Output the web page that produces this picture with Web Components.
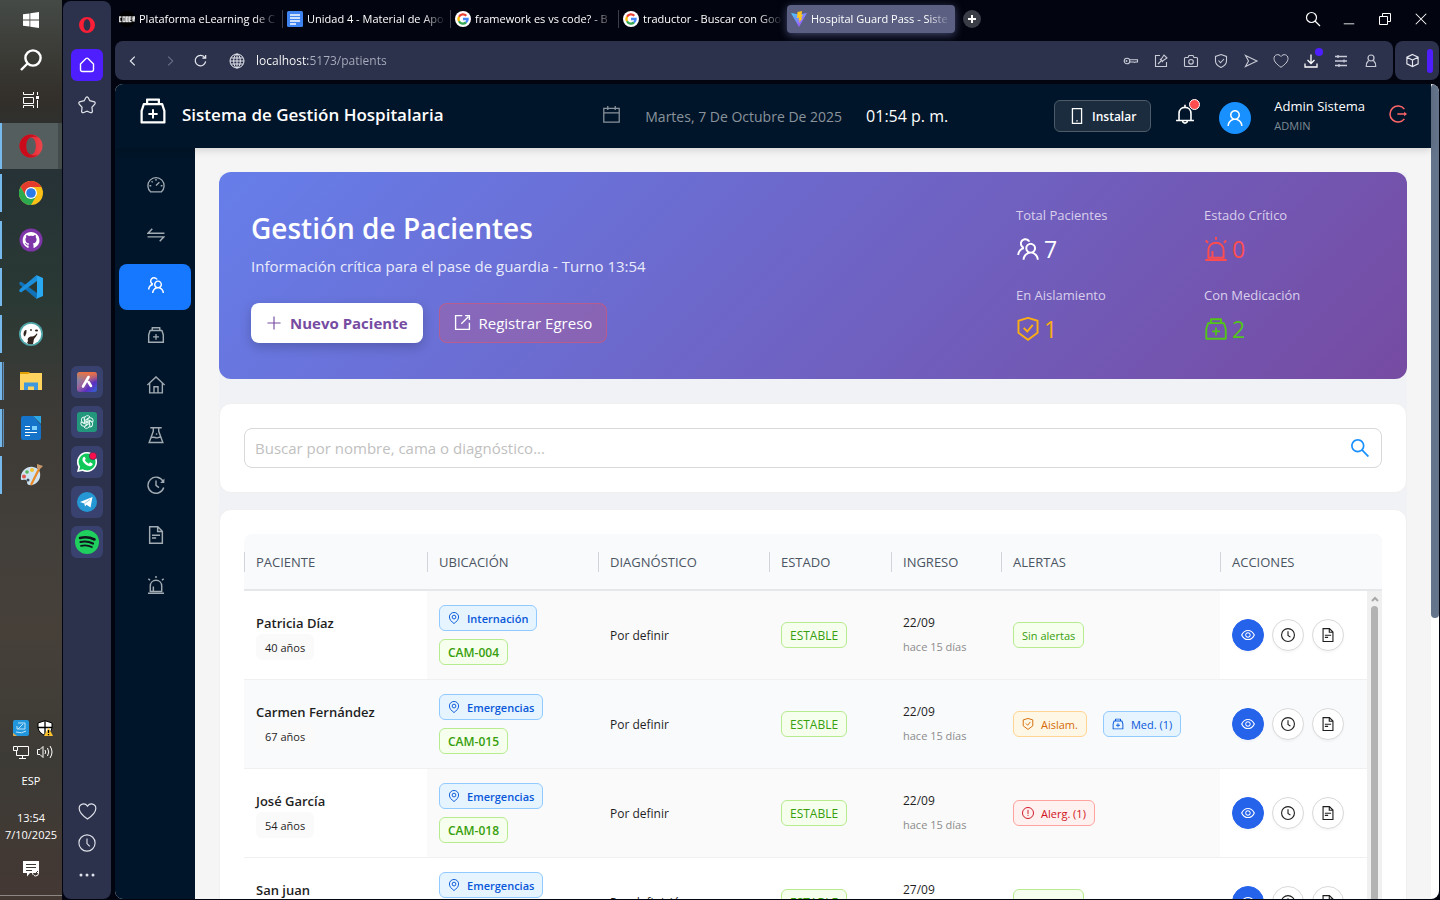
<!DOCTYPE html>
<html lang="es">
<head>
<meta charset="utf-8">
<title>Hospital Guard Pass - Sistema de Gestión</title>
<style>
html,body{margin:0;height:100%}
body{background:#02040f;font-family:"Open Sans","Noto Sans",sans-serif;font-size:13px;color:#1f1f1f;overflow:hidden}
</style>
</head>
<body>
<desktop-shell></desktop-shell>
<script>
/* ---------- icon registry ---------- */
const A = d => ['64 64 896 896', `<path fill="currentColor" d="${d}"/>`];
const L = (d, w = 1) => ['0 0 16 16', `<g fill="none" stroke="currentColor" stroke-width="${w}">${d}</g>`];
const SA = (d, w = 72) => ['64 64 896 896', `<g fill="none" stroke="currentColor" stroke-width="${w}">${d}</g>`];
const ICONS = {
  medicine: A('M839.2 278.1a32 32 0 00-30.4-22.1H736V144c0-17.7-14.3-32-32-32H320c-17.7 0-32 14.3-32 32v112h-72.8a31.9 31.9 0 00-30.4 22.1L112 502v378c0 17.7 14.3 32 32 32h736c17.7 0 32-14.3 32-32V502l-72.8-223.9zM360 184h304v72H360v-72zm480 656H184V513.4L244.3 328h535.4L840 513.4V840zM652 572H544V464c0-4.4-3.6-8-8-8h-48c-4.4 0-8 3.6-8 8v108H372c-4.4 0-8 3.6-8 8v48c0 4.4 3.6 8 8 8h108v108c0 4.4 3.6 8 8 8h48c4.4 0 8-3.6 8-8V636h108c4.4 0 8-3.6 8-8v-48c0-4.4-3.6-8-8-8z'),
  team: A('M824.2 699.9a301.55 301.55 0 00-86.4-60.4C783.1 602.8 812 546.8 812 484c0-110.8-92.4-201.7-203.2-200-109.1 1.7-197 90.6-197 200 0 62.8 29 118.8 74.2 155.5a300.95 300.95 0 00-86.4 60.4C345 754.6 314 826.8 312 903.8a8 8 0 008 8.2h56c4.3 0 7.9-3.4 8-7.7 1.9-58 25.4-112.3 66.7-153.5A226.62 226.62 0 01612 684c60.9 0 118.2 23.7 161.3 66.8C814.6 792 838 846.3 840 904.3c.1 4.3 3.7 7.7 8 7.7h56a8 8 0 008-8.2c-2-77-33-149.2-87.8-203.9zM612 612c-34.2 0-66.4-13.3-90.5-37.5a126.86 126.86 0 01-37.5-91.8c.3-32.8 13.4-64.5 36.3-88 24-24.6 56.1-38.3 90.4-38.7 33.9-.3 66.8 12.9 91 36.6 24.8 24.3 38.4 56.8 38.4 91.4 0 34.2-13.3 66.3-37.5 90.5A127.3 127.3 0 01612 612zM361.5 510.4c-.9-8.7-1.4-17.5-1.4-26.4 0-15.9 1.5-31.4 4.3-46.5.7-3.6-1.2-7.3-4.5-8.8-13.6-6.1-26.1-14.5-36.9-25.1a127.54 127.54 0 01-38.7-95.4c.9-32.1 13.8-62.6 36.3-85.6 24.7-25.3 57.9-39.1 93.2-38.7 31.9.3 62.7 12.6 86 34.4 7.9 7.4 14.7 15.6 20.4 24.4 2 3.1 5.9 4.4 9.3 3.2 17.6-6.1 36.2-10.4 55.3-12.4 5.6-.6 8.8-6.6 6.3-11.6-32.5-64.3-98.9-108.7-175.7-109.9-110.9-1.7-203.3 89.2-203.3 199.9 0 62.8 28.9 118.8 74.2 155.5-31.8 14.7-61.1 35-86.5 60.4-54.8 54.7-85.8 126.9-87.8 204a8 8 0 008 8.2h56.1c4.3 0 7.9-3.4 8-7.7 1.9-58 25.4-112.3 66.7-153.5 29.4-29.4 65.4-49.8 104.7-59.7 3.9-1 6.5-4.7 6-8.7z'),
  user: A('M858.5 763.6a374 374 0 00-80.6-119.5 375.63 375.63 0 00-119.5-80.6c-.4-.2-.8-.3-1.2-.5C719.5 518 760 444.7 760 362c0-137-111-248-248-248S264 225 264 362c0 82.7 40.5 156 102.8 201.1-.4.2-.8.3-1.2.5-44.8 18.9-85 46-119.5 80.6a375.63 375.63 0 00-80.6 119.5A371.7 371.7 0 00136 901.8a8 8 0 008 8.2h60c4.4 0 7.9-3.5 8-7.8 2-77.2 33-149.5 87.8-204.3 56.7-56.7 132-87.9 212.2-87.9s155.5 31.2 212.2 87.9C779 752.7 810 825 812 902.2c.1 4.4 3.6 7.8 8 7.8h60a8 8 0 008-8.2c-1-47.8-10.9-94.3-29.5-138.2zM512 534c-45.9 0-89.1-17.9-121.6-50.4S340 407.9 340 362c0-45.9 17.9-89.1 50.4-121.6S466.1 190 512 190s89.1 17.9 121.6 50.4S684 316.1 684 362c0 45.9-17.9 89.1-50.4 121.6S557.9 534 512 534z'),
  search: A('M909.6 854.5L649.9 594.8C690.2 542.7 712 479 712 412c0-80.2-31.3-155.4-87.9-212.1-56.6-56.7-132-87.9-212.1-87.9s-155.5 31.3-212.1 87.9C143.2 256.5 112 331.8 112 412c0 80.1 31.3 155.5 87.9 212.1C256.5 680.8 331.8 712 412 712c67 0 130.6-21.8 182.7-62l259.7 259.6a8.2 8.2 0 0011.6 0l43.6-43.5a8.2 8.2 0 000-11.6zM570.4 570.4C528 612.7 471.8 636 412 636s-116-23.3-158.4-65.6C211.3 528 188 471.8 188 412s23.3-116.1 65.6-158.4C296 211.3 352.2 188 412 188s116.1 23.2 158.4 65.6S636 352.2 636 412s-23.3 116.1-65.6 158.4z'),
  eye: A('M942.2 486.2C847.4 286.5 704.1 186 512 186c-192.2 0-335.4 100.5-430.2 300.3a60.3 60.3 0 000 51.5C176.6 737.5 319.9 838 512 838c192.2 0 335.4-100.5 430.2-300.3 7.7-16.2 7.7-35 0-51.5zM512 766c-161.3 0-279.4-81.8-362.7-254C232.6 339.8 350.7 258 512 258c161.3 0 279.4 81.8 362.7 254C791.5 684.2 673.4 766 512 766zm-4-430c-97.2 0-176 78.8-176 176s78.8 176 176 176 176-78.8 176-176-78.8-176-176-176zm0 288c-61.9 0-112-50.1-112-112s50.1-112 112-112 112 50.1 112 112-50.1 112-112 112z'),
  clock: SA('<circle cx="512" cy="512" r="412"/><path d="M512 272V534L668 648"/>'),
  doc: SA('<path d="M196 100H602L828 326V924H196ZM594 100V334H828"/><path d="M312 524H712M312 660H520"/>'),
  shield: SA('<path d="M512 98L868 206V650L512 916L156 650V206Z"/><path d="M352 470L484 606L690 356"/>'),
  alert: SA('<path d="M228 838V560C228 400 350 280 512 280S796 400 796 560V838Z"/><path d="M380 838V590M112 924H912M512 64V168M130 196L216 280M894 196L808 280"/>'),
  pin: SA('<path d="M512 924C330 790 168 640 168 434C168 236 330 98 512 98S856 236 856 434C856 640 694 790 512 924Z"/><circle cx="512" cy="442" r="140"/>'),
  warn: SA('<circle cx="512" cy="512" r="412"/><path d="M512 280V580M512 650V726"/>'),
  calendar: SA('<path d="M148 220H876V876H148ZM148 436H876M336 112V296M688 112V296"/>', 60),
  mobile: SA('<path d="M256 100H768V924H256Z"/><path d="M472 786H552"/>'),
  bell: SA('<path d="M244 804V484C244 330 356 216 512 216S780 330 780 484V804M112 804H912M512 216V100M404 816C410 890 450 920 512 920S614 890 620 816"/>'),
  logout: SA('<path d="M830 268A400 400 0 1 0 830 756"/><path d="M480 512H860"/><path fill="currentColor" stroke="none" d="M820 400L960 512L820 624Z"/>', 76),
  plus: SA('<path d="M512 144V880M144 512H880"/>', 64),
  export: SA('<path d="M500 148H148V876H876V524M450 574L820 204M650 148H876V374"/>'),
  gauge: SA('<path d="M250 856A404 404 0 1 1 774 856Z"/><path d="M512 540L680 372M512 210V296M190 548H276M748 548H834M292 328L346 382"/>', 66),
  swap: SA('<path d="M932 420H120L326 196M92 604H904L698 828"/>', 72),
  home: SA('<path d="M80 516L512 110L944 516M196 420V904H828V420M412 904V600H612V904"/>', 70),
  flask: SA('<path d="M228 148H796M376 148V330L172 884H852L648 330V148M256 650C400 560 500 700 620 640L750 590"/><path d="M540 430V500"/>', 70),
  history: SA('<path d="M862 326A400 400 0 1 0 896 640"/><path d="M512 290V528L660 640"/><path fill="currentColor" stroke="none" d="M930 190V410H720Z"/>', 70),
  o_home: L('<path d="M1.500 7L7 1.500Q8 .8 9 1.500L14.500 7V12.500Q14.500 14.500 12.500 14.500H3.500Q1.500 14.500 1.500 12.500Z"/>', 1.4),
  o_star: L('<path d="M7 1.400Q8 .3 9 1.400L10.500 4.200L14.600 5.200Q15.700 6 14.900 7.200L12.400 10L12.800 13.800Q12.300 15.300 10.800 14.700L8 13.500L5.200 14.700Q3.700 15.300 3.200 13.800L3.600 10L1.100 7.200Q.3 6 1.400 5.200L5.500 4.200Z"/>', 1.1),
  heart: L('<path d="M8 14.300C4 11.500 1 8.800 1 5.400C1 1.500 5.800 .3 8 3.500C10.200 .3 15 1.500 15 5.400C15 8.800 12 11.500 8 14.300Z"/>'),
  o_clock: L('<circle cx="8" cy="8" r="7.200"/><path d="M8 4V8.500L10.500 11"/>'),
  dots: ['0 0 16 16', '<g fill="currentColor"><circle cx="2" cy="8" r="1.500"/><circle cx="8" cy="8" r="1.500"/><circle cx="14" cy="8" r="1.500"/></g>'],
  back: L('<path d="M10 3L5 8L10 13"/>', 1.4),
  fwd: L('<path d="M6 3L11 8L6 13"/>', 1.2),
  reload: L('<path d="M12.700 5A5.600 5.600 0 1 0 13.500 9M13.500 2V5.500H10"/>', 1.3),
  globe: L('<circle cx="8" cy="8" r="7"/><ellipse cx="8" cy="8" rx="3.300" ry="7"/><path d="M8 1V15M1.800 5H14.200M1.800 11H14.200M1 8H15"/>'),
  key: L('<circle cx="4" cy="8" r="2.800"/><circle cx="3.500" cy="8" r=".4"/><path d="M6.500 6.800H14.500V9H12.500L11.500 9.500L10.500 9H6.500"/>', 1.1),
  pinpage: L('<path d="M7 2.500H2.500V13.500H13.500V9M5 11L8 8M7 6L10 9M8 6.500L11 2L14 5L9.500 8"/>', 1.1),
  camera: L('<path d="M2.500 4.500H5L6 2.500H10L11 4.500H13.500Q14.500 4.500 14.500 5.500V12.500Q14.500 13.500 13.500 13.500H2.500Q1.500 13.500 1.500 12.500V5.500Q1.500 4.500 2.500 4.500Z"/><circle cx="8" cy="8.800" r="2.300"/>', 1.1),
  shield2: L('<path d="M8 1.500L13.500 3.500V8Q13.500 12 8 14.500Q2.500 12 2.500 8V3.500Z"/><path d="M5.500 7.500L7.500 9.800L11 6"/>', 1.1),
  send: L('<path d="M2.500 2.500L14 8L2.500 13.500L5.500 8Z"/>', 1.1),
  download: L('<path d="M8 1.500V10M4.500 7L8 10.500L11.500 7M2 10.500V14H14V10.500"/>', 1.3),
  sliders: L('<path d="M2 3.500H14M2 8H14M2 12.500H14M5 2V5M11 6.500V9.500M6 11V14"/>', 1.3),
  person: L('<circle cx="8" cy="5" r="3"/><path d="M5.500 7.500Q3 10 3.300 13.500H12.700Q13 10 10.500 7.500"/>', 1.2),
  cube: L('<path d="M8 1.500L14 4.500V11.500L8 14.500L2 11.500V4.500ZM2 4.500L8 7.500L14 4.500M8 7.500V14.500"/>', 1.2),
  w_search: L('<circle cx="6.500" cy="6.500" r="5"/><path d="M10 10L15 15"/>', 1.2),
  w_min: L('<path d="M2 13.500H14"/>'),
  w_restore: L('<path d="M2.500 5.500H10.500V13.500H2.500ZM5.500 5.500V2.500H13.500V10.500H10.500"/>'),
  w_close: L('<path d="M2 2L14 14M14 2L2 14"/>', 1.2),
  w_plus: ['0 0 18 18', '<circle cx="9" cy="9" r="9" fill="#3a3c46"/><path d="M9 5V13M5 9H13" stroke="#fff" stroke-width="2"/>'],
  windows: ['0 0 16 16', '<path fill="#fff" d="M0 2.300L6.500 1.400V7.600H0ZM7.300 1.200L16 0V7.600H7.300ZM0 8.400H6.500V14.600L0 13.700ZM7.300 8.400H16V16L7.300 14.800Z"/>'],
  t_search: ['0 0 22 22', '<g fill="none" stroke="#fff" stroke-width="2.400"><circle cx="13" cy="9" r="7.600"/><path d="M7.500 14.500L1 21"/></g>'],
  taskview: ['0 0 16 16', '<path fill="none" stroke="#fff" d="M.5 5.500H10.500V11.500H.5ZM.5 0V2.500H10.500V0M.5 16V13.500H10.500V16M14.500 0V3M14.500 8V16"/><path fill="#fff" d="M13 4h3v3h-3z"/>'],
  opera: ['0 0 24 24', '<defs><linearGradient id="g" x2="1" y2="0"><stop offset=".3" stop-color="#f01c2c"/><stop offset="1" stop-color="#e8484c"/></linearGradient></defs><path fill="url(#g)" fill-rule="evenodd" d="M12 .5a11.500 11.500 0 100 23a11.500 11.500 0 100-23zM12 3.500c3 0 4.800 3.800 4.800 8.500s-1.800 8.500-4.800 8.500-4.800-3.800-4.800-8.500S9 3.500 12 3.500z"/><path fill="#b00010" opacity=".6" d="M12 .5a11.500 11.500 0 000 23c3 0 5-1 7-3-4 2-8 1-10.400-2.500-1.800-3-1.800-9 0-12C11 2 15 2 19 4c-2-2.300-4-3.500-7-3.500z"/>'],
  opera2: ['0 0 24 24', '<path fill="#fa1e36" fill-rule="evenodd" d="M12 0a12 12 0 100 24a12 12 0 100-24zM12 3.500c3 0 5 3.700 5 8.500s-2 8.500-5 8.500-5-3.700-5-8.500S9 3.500 12 3.500z"/>'],
  chrome: ['0 0 24 24', '<circle cx="12" cy="12" r="12" fill="#fbc116"/><path fill="#e33b2e" d="M1.600 6A12 12 0 0122.400 6H12L6.800 15Z"/><path fill="#2da94f" d="M1.600 6A12 12 0 0012 24L17.200 15L12 17L7 15Z"/><circle cx="12" cy="12" r="6" fill="#fff"/><circle cx="12" cy="12" r="4.800" fill="#2a7be8"/>'],
  github: ['0 0 24 24', '<circle cx="12" cy="12" r="11.500" fill="#7d35a8"/><path fill="#fff" d="M12 4a8.200 8.200 0 00-3 15.900c.5.100.6-.2.600-.5v-2c-2.300.4-2.800-.8-3-1.400-.3-.5-.6-.7-.9-.9.900-.2 1.500.5 1.800 1 .6.900 1.500.9 2.100.6.100-.6.300-1 .6-1.200-2-.3-3.800-1.200-3.800-4 0-.9.300-1.600.9-2.200-.1-.5-.3-1.200.1-2.200.9 0 1.700.5 2.300.9a8 8 0 014.600 0c.6-.4 1.400-.9 2.300-.9.400 1 .2 1.700.1 2.200.6.600.9 1.300.9 2.200 0 2.800-1.900 3.700-3.800 4 .4.300.7.900.7 1.700v2.200c0 .3.100.6.600.5A8.200 8.200 0 0012 4z"/>'],
  vscode: ['0 0 24 24', '<path fill="#1172b8" d="M0 8L2 6.500L18 18V23.500L16.500 23L1 10Z"/><path fill="#1c8fdc" d="M0 16L2 17.500L18 6V.5L16.500 1L1 14Z"/><path fill="#29a9f2" d="M17 0L24 3V21L17 24L18 22V2Z"/>'],
  dbeaver: ['0 0 24 24', '<circle cx="12" cy="12" r="12" fill="#4fa5a8"/><circle cx="12" cy="12" r="10.300" fill="#fff"/><path fill="#32241e" d="M9 19C8 16 10 14.500 13 14.500C15 14.500 17 13 17.500 11.500L18.500 12L17 14.500L15 17L14 22Q10 23 8 21Z"/><circle cx="12" cy="8" r=".9" fill="#32241e"/><ellipse cx="17.500" cy="8.500" rx="1.600" ry="1.100" fill="#32241e"/><path d="M4.500 12Q5 7.500 7.500 8Q8 11 6 14.500Q4.500 14 4.500 12Z" fill="#32241e"/>'],
  folder: ['0 0 24 24', '<path fill="#e0a000" d="M1 3H10L12 5V8H1Z"/><path fill="#ffd45e" d="M1 5H9L11 4H23V21H1Z"/><path fill="#3f97dd" d="M5 21V13.500H19V21H15V17.500H9V21Z"/>'],
  writer: ['0 0 24 24', '<path fill="#1573c9" d="M4 0H14L22 9V22Q22 24 20 24H4Q2 24 2 22V2Q2 0 4 0Z"/><path fill="#2ba7e6" d="M14 0H22V8Z"/><path stroke="#fff" d="M6 10.500H11M6 13.500H11M6 16.500H18M6 19.500H11"/><path fill="#7fd2ff" d="M13 10h5v4h-5z"/>'],
  paint: ['0 0 24 24', '<path fill="#cfe3f1" d="M2 14C2 8 8 3 14 4C20 5 22 9 21 14C20 19 15 23 10 22C7 21 9 18 7 17C5 16 1 19 2 14Z"/><circle cx="5" cy="13.500" r="2" fill="#e0574d"/><circle cx="8" cy="9" r="1.800" fill="#58b45a"/><circle cx="13" cy="7" r="2" fill="#f2c230"/><circle cx="9" cy="17" r="1.500" fill="#3c4a55"/><path stroke="#e98a28" stroke-width="2.200" d="M12 22L20 6"/><path fill="#c9986a" d="M18 1L24 3L20 7L18 5Z"/>'],
  aria: ['0 0 20 20', '<defs><linearGradient id="a" x2="1" y2="1"><stop offset="0" stop-color="#3ea6d8"/><stop offset=".4" stop-color="#a06a98"/><stop offset=".7" stop-color="#5b2fc0"/><stop offset="1" stop-color="#2f6ad8"/></linearGradient><linearGradient id="b" x2="0" y2="1"><stop offset="0" stop-color="#f0703c"/><stop offset=".5" stop-color="#f0703c" stop-opacity="0"/></linearGradient></defs><rect width="20" height="20" rx="3" fill="url(#a)"/><rect width="20" height="20" rx="3" fill="url(#b)"/><path stroke="#fff" stroke-width="2.600" stroke-linecap="round" d="M11.500 5L6 14.500M11.500 10L14 14"/>'],
  gpt: ['0 0 20 20', `<rect width="20" height="20" rx="3" fill="#23977c"/><g fill="none" stroke="#dff5ee" stroke-width="1">${[0, 60, 120, 180, 240, 300].map(r => `<path transform="rotate(${r} 10 10)" d="M7.500 11.500V6.500A3 3 0 0 1 13 5L10 6.800V10"/>`).join('')}</g>`],
  whatsapp: ['0 0 20 20', '<path fill="#fff" d="M10 0a10 10 0 11-4.500 18.900L0 20l1.300-5A10 10 0 0110 0z"/><path fill="#10c95a" d="M10 1.600a8.400 8.400 0 11-4.200 15.600L2.200 18l.9-3.300A8.400 8.400 0 0110 1.600z"/><path fill="#fff" d="M6.500 5q1-.8 1.500.2l.7 1.600q.1.500-.8 1.400 1.400 2.600 3.900 3.500l1-1.100q.4-.4.900-.1l1.700.9q.6.500 0 1.500-1.300 1.800-3.500 1.200Q7.500 12.800 5.500 8.500 5 6.300 6.500 5z"/><circle cx="16" cy="4" r="3.700" fill="#fa0f4c" stroke="#2c3560" stroke-width=".6"/>'],
  telegram: ['0 0 20 20', '<circle cx="10" cy="10" r="10" fill="#2497d4"/><path fill="#fff" d="M3 10L15.500 5L13.500 15.500L9.500 12.700L8 14.500L7.300 11.500Z"/><path stroke="#9cc8e4" d="M7.500 11.500L13 7.500"/>'],
  spotify: ['0 0 24 24', '<circle cx="12" cy="12" r="12" fill="#1fd05f"/><g fill="none" stroke="#10151c" stroke-linecap="round"><path stroke-width="2.600" d="M5 8Q12.500 6 19.500 9.500"/><path stroke-width="2.200" d="M5.500 12Q12 10.500 18 13.500"/><path stroke-width="1.800" d="M6 15.800Q12 14.500 16.800 17"/></g>'],
  intel: ['0 0 16 16', '<rect width="16" height="16" rx="2" fill="#2196dd"/><path fill="none" stroke="#bfe4fa" d="M5 3H12V9H4V6M3 12Q9 14 13 11M5 9L10 4"/><path fill="#e8b040" d="M0 13L4 16H1Q0 16 0 15Z"/>'],
  defender: ['0 0 16 16', '<path fill="#fff" stroke="#000" d="M8 .7L15 3V8Q14 13 8 15.500Q2 13 1 8V3Z"/><path stroke="#000" stroke-width="1.300" d="M8 1V15M1 7.500H15"/><path fill="#fdc42d" d="M11.500 7.500L16 16H7Z"/><path stroke="#000" stroke-width="1.300" d="M11.500 10V13M11.500 14V15.300"/>'],
  network: ['0 0 16 16', '<path fill="none" stroke="#fff" d="M5 2.500H15.500V11.500H3.500V7M9.500 11.500V14M6 14.500H13M.5 2.500H4.500V6.500H.5Z"/>'],
  volume: ['0 0 16 16', '<path fill="none" stroke="#fff" d="M.5 5.500H3L6 2.500V13.500L3 10.500H.5ZM8 6Q9.500 8 8 10M10.500 4Q13 8 10.500 12M13 2Q17 8 13 14"/>'],
  notif: ['0 0 16 16', '<path fill="#fff" d="M0 0H16V12H7L4 15.500V12H0Z"/><path stroke="#403a36" d="M3 3.500H13M3 6.500H13M3 9.500H9"/><circle cx="12.500" cy="12" r="3" fill="none" stroke="#fff"/><path stroke="#403a36" d="M10 15L15 10"/>'],
  google: ['0 0 16 16', '<circle cx="8" cy="8" r="8" fill="#fff"/><g fill="none" stroke-width="2.300"><path stroke="#ea4335" d="M11.300 4.700A4.600 4.600 0 004 5.800"/><path stroke="#fbbc05" d="M4 5.800A4.600 4.600 0 004 10.200"/><path stroke="#34a853" d="M4 10.200A4.600 4.600 0 0011 11.500"/><path stroke="#4285f4" d="M11 11.500A4.600 4.600 0 0012.600 8H8"/></g>'],
  docs: ['0 0 16 16', '<rect width="16" height="16" rx="1.500" fill="#3f83f0"/><path stroke="#fff" stroke-width="1.700" d="M3 4H13M3 7H13M3 10H13M3 13H9"/>'],
  coder: ['0 0 16 16', '<circle cx="8" cy="8" r="8" fill="#000"/><path stroke="#e0e0e0" stroke-width="1.300" fill="none" d="M2.500 6H.7V10.500H2.500M4 6H6V10.500H4ZM7.500 6V10.500H9V6ZM12.500 6H10.500V10.500H12.500M10.500 8H12.500M14 10.500V6H15.500V8H14L15.500 10.500"/>'],
  vite: ['0 0 16 16', '<defs><linearGradient id="v" x2="1" y2="1"><stop offset="0" stop-color="#41d1ff"/><stop offset="1" stop-color="#bd34fe"/></linearGradient></defs><path fill="url(#v)" d="M0 2L8 3.500L16 2L8 16Z"/><path fill="#ffc71c" d="M11 0L6.500 1L6 7L8 6.700L7.500 9.500L8.700 9L8 12L11.500 7L10 7.300L12 4L10.500 4.200Z"/>'],
};

/* ---------- base class ---------- */
class Base extends HTMLElement {
  connectedCallback() {
    if (this.shadowRoot) return;
    this.attachShadow({ mode: 'open' }).innerHTML =
      `<style>*{box-sizing:border-box}button{font:inherit;color:inherit;margin:0;padding:0;border:0;background:none;display:flex;align-items:center;justify-content:center}a{color:inherit;text-decoration:none}${this.css()}</style>${this.html()}`;
  }
  css() { return ''; }
  html() { return '<slot></slot>'; }
}
const def = (n, css, html) => customElements.define(n, class extends Base {
  css() { return typeof css === 'function' ? css(this) : css; }
  html() { return typeof html === 'function' ? html(this) : html || '<slot></slot>'; }
});
const ic = (name, size = 16) => `<ui-icon name="${name}" size="${size}"></ui-icon>`;

def('ui-icon', e => `:host{display:inline-flex;flex:none;width:${e.getAttribute('size')}px;height:${e.getAttribute('size')}px}svg{width:100%;height:100%;display:block}`,
  e => { const [vb, body] = ICONS[e.getAttribute('name')]; return `<svg viewBox="${vb}" aria-hidden="true">${body}</svg>`; });

/* ---------- operating system taskbar ---------- */
def('task-item', `
:host{display:block}
button{width:100%;height:46px;position:relative}
:host([active]) button{background:#555e5e;box-shadow:inset -4px 0 #434b4b}
button::before{content:"";position:absolute;left:0;top:4px;bottom:4px;width:2px;background:#76b9ed}
:host([active]) button::before{top:0;bottom:0}
:host([multi]) button::before{width:4px;background:linear-gradient(to right,#76b9ed 2px,#3f5566 2px,#3f5566 3px,#5d8fb8 3px)}`,
  e => `<button aria-label="${e.getAttribute('label')}">${ic(e.getAttribute('icon'), 24)}</button>`);

def('os-taskbar', `
:host{display:flex;flex-direction:column;color:#fff;font-size:12px;background:linear-gradient(#454a46 0,#332f2a 11%,#263236 19%,#2a3934 33%,#3c3a36 44%,#433f3a 60%,#464039 70%,#3d3b36 85%,#443833 100%)}
.sys button{width:100%;height:40px}
.apps{display:flex;flex-direction:column;gap:1px;margin-top:3px}
.tray{margin-top:auto;display:flex;flex-direction:column;align-items:center}
.icons{display:grid;grid-template-columns:16px 16px;gap:8px;margin-bottom:12px;padding-left:4px}
.lang{font-size:11px;line-height:17px;margin-bottom:20px}
.time{font-size:11px;line-height:17px;text-align:center}
.notif{height:52px;width:100%}
.line{height:1px;align-self:stretch;background:#8d8784;margin-bottom:4px}`,
`<div class="sys"><button aria-label="Inicio">${ic('windows', 16)}</button><button aria-label="Buscar">${ic('t_search', 22)}</button><button aria-label="Vista de tareas">${ic('taskview', 16)}</button></div>
<div class="apps"><task-item active icon="opera" label="Opera"></task-item><task-item icon="chrome" label="Chrome"></task-item><task-item icon="github" label="GitHub"></task-item><task-item icon="vscode" label="VS Code"></task-item><task-item icon="dbeaver" label="DBeaver"></task-item><task-item multi icon="folder" label="Archivos"></task-item><task-item multi icon="writer" label="Writer"></task-item><task-item icon="paint" label="Paint"></task-item></div>
<div class="tray"><div class="icons">${ic('intel')}${ic('defender')}${ic('network')}${ic('volume')}</div><div class="lang">ESP</div><div class="time">13:54<br>7/10/2025</div><button class="notif" aria-label="Notificaciones">${ic('notif')}</button><div class="line"></div></div>`);

/* ---------- browser sidebar ---------- */
def('browser-sidebar', `
:host{display:flex;flex-direction:column;justify-content:space-between;align-items:center;background:#2d324c;border-radius:8px;padding:8px 0;color:#dfe1ea}
div{display:flex;flex-direction:column;gap:8px}
button{width:32px;height:32px;border-radius:6px}
.on{background:#4f1eff;color:#fff}
.apps{margin-top:8px}
.apps button{background:#39426e}
.end{gap:0}`,
`<div><button aria-label="Opera">${ic('opera2', 16)}</button><button class="on" aria-label="Inicio">${ic('o_home')}</button><button aria-label="Marcadores">${ic('o_star', 18)}</button></div>
<div class="apps"><button aria-label="Aria">${ic('aria', 20)}</button><button aria-label="ChatGPT">${ic('gpt', 20)}</button><button aria-label="WhatsApp">${ic('whatsapp', 20)}</button><button aria-label="Telegram">${ic('telegram', 20)}</button><button aria-label="Spotify">${ic('spotify', 24)}</button></div>
<div class="end"><button aria-label="Favoritos">${ic('heart', 19)}</button><button aria-label="Historial">${ic('o_clock', 18)}</button><button aria-label="Más">${ic('dots', 16)}</button></div>`);

/* ---------- browser tabs ---------- */
def('browser-tab', `
:host{display:flex;flex:0 1 168px;min-width:0;height:28px;align-items:center;color:#fff}
button{gap:4px;width:100%;height:100%;padding:0 4px;border-radius:4px;justify-content:flex-start;min-width:0}
span{flex:1;min-width:0;overflow:hidden;white-space:nowrap;text-align:left;font-size:11px;font-weight:500;line-height:18px;-webkit-mask:linear-gradient(to left,transparent 0,#000 24px)}
i{width:1px;height:18px;background:#3c3e4c;flex:none}
:host([active]) button{background:#5b6083;box-shadow:0 2px 8px #40466a}
:host([active]) i,:host([last]) i{display:none}`,
  e => `<button role="tab">${ic(e.getAttribute('icon'))}<span><slot></slot></span></button><i></i>`);

def('tab-strip', `
:host{display:flex;height:41px;padding-top:5px;color:#fff}
.tabs{display:flex;flex:1;min-width:0}
.add{height:28px;margin-left:8px}
.win{display:flex}
.win button{width:36px;height:28px}`,
`<div class="tabs"><browser-tab icon="coder">Plataforma eLearning de C</browser-tab><browser-tab icon="docs">Unidad 4 - Material de Apo</browser-tab><browser-tab icon="google">framework es vs code? - B</browser-tab><browser-tab icon="google" last>traductor - Buscar con Goo</browser-tab><browser-tab icon="vite" active>Hospital Guard Pass - Siste</browser-tab><button class="add" aria-label="Nueva pestaña">${ic('w_plus', 18)}</button></div>
<div class="win"><button aria-label="Buscar pestañas">${ic('w_search')}</button><button aria-label="Minimizar">${ic('w_min', 14)}</button><button aria-label="Restaurar">${ic('w_restore')}</button><button aria-label="Cerrar">${ic('w_close', 14)}</button></div>`);

def('address-bar', `
:host{display:flex;gap:2px;height:39px;color:#e6e8f0}
.bar{flex:1;display:flex;align-items:center;background:#2d324c;border-radius:8px;padding:0 7px 0 2px;min-width:0}
.nav{width:31px;height:30px}.nav.fwd{color:#70758c;margin-left:6px}.globe{margin-left:13px;display:flex}
input{flex:1;min-width:0;border:0;outline:0;padding:0;margin-left:11px;height:24px;font:inherit;font-size:12px;color:transparent;background:linear-gradient(to right,#fff 52px,#a9aebf 52px);-webkit-background-clip:text;background-clip:text}
.tool{width:30px;height:30px;position:relative;color:#c9ccd7}
.dot{color:#fff}
.dot::after{content:"";position:absolute;right:3px;top:2px;width:8px;height:8px;border-radius:50%;background:#4f1eff}
.side{display:flex;align-items:center;gap:7px;width:44px;padding-left:10px;background:#2d324c;border-radius:8px}
.side i{width:6px;height:24px;border-radius:3px;background:#4f1eff}`,
`<div class="bar"><button class="nav" aria-label="Atrás">${ic('back', 14)}</button><button class="nav fwd" aria-label="Adelante">${ic('fwd', 14)}</button><button class="nav" aria-label="Recargar">${ic('reload', 15)}</button><span class="globe">${ic('globe', 16)}</span><input aria-label="Dirección" value="localhost:5173/patients">${['key', 'pinpage', 'camera', 'shield2', 'send', 'heart', 'download', 'sliders', 'person'].map(n => `<button class="tool${n === 'download' ? ' dot' : ''}" aria-label="${n}">${ic(n, 16)}</button>`).join('')}</div>
<div class="side"><button aria-label="Extensiones">${ic('cube', 15)}</button><i></i></div>`);

/* ---------- hospital application ---------- */
def('app-header', `
:host{display:flex;align-items:center;height:64px;padding:0 24px;background:#001529;color:#fff;box-shadow:0 2px 8px rgba(0,0,0,.15);position:relative}
.g{display:flex;align-items:center}
.s3{flex:3}.s2{flex:2}
h1{margin:0 0 0 15px;font-size:17px;font-weight:600;line-height:24px;padding-bottom:2px}
.logo{padding-bottom:10px;display:flex}
.cal{color:#8a939c;display:flex;padding-bottom:4px}
.date{color:#8a939c;margin:0 24px;font-size:14px;font-weight:500}
.time{font-size:16px;font-weight:400}
.install{height:32px;padding:0 14px;gap:7px;border:1px solid #4d5b69;border-radius:6px;background:#1a2c3e;font-weight:600;font-size:12px}
.bell{width:20px;height:32px;margin-left:24px;position:relative;padding-bottom:4px}
.bell::after{content:"";position:absolute;right:-5px;top:-1px;width:9px;height:9px;border-radius:50%;background:#ff4d4f;border:1px solid #fff}
.av{width:32px;height:32px;border-radius:50%;background:#1890ff;display:flex;align-items:center;justify-content:center;margin:4px 23px 0 24px}
.who{display:flex;flex-direction:column;line-height:20px;font-size:13px;font-weight:500}
.who small{font-size:11px;font-weight:400;color:#7f8a94}
.out{color:#ff6669;margin-left:24px;padding-bottom:4px}`,
`<div class="g"><span class="logo">${ic('medicine', 28)}</span><h1>Sistema de Gestión Hospitalaria</h1></div><span class="s3"></span>
<div class="g"><span class="cal">${ic('calendar', 19)}</span><span class="date">Martes, 7 De Octubre De 2025</span><span class="time">01:54 p. m.</span></div><span class="s2"></span>
<div class="g"><button class="install">${ic('mobile')}Instalar</button><button class="bell" aria-label="Avisos">${ic('bell', 20)}</button><span class="av">${ic('user', 18)}</span><span class="who">Admin Sistema<small>ADMIN</small></span><button class="out" aria-label="Salir">${ic('logout', 18)}</button></div>`);

def('app-nav', `
:host{display:flex;flex-direction:column;gap:4px;width:80px;padding:16px 4px;background:#001529;color:#a2abb3}
a{height:46px;border-radius:8px;display:flex;align-items:center;justify-content:center;padding:0 0 4px 2px}
a.on{background:#1677ff;color:#fff}`,
  ['gauge', 'swap', 'team', 'medicine', 'home', 'flask', 'history', 'doc', 'alert'].map(n => `<a href="#${n}" aria-label="${n}"${n === 'team' ? ' class="on"' : ''}>${ic(n, 18)}</a>`).join(''));

def('stat-item', e => `
:host{display:block}
.l{font-size:13px;line-height:22px;color:#d9cfec}
.v{display:flex;align-items:center;gap:4px;height:36px;margin:5px 0 1px;font-size:23px;color:${e.getAttribute('color')}}`,
  e => `<div class="l">${e.getAttribute('label')}</div><div class="v">${ic(e.getAttribute('icon'), 24)}<slot></slot></div>`);

def('patient-banner', `
:host{display:flex;align-items:center;min-height:207px;padding:0 31px 0 32px;border-radius:12px;background:linear-gradient(135deg,#667eea 0%,#764ba2 100%);color:#fff}
.t{flex:1}
h2{margin:0;font-size:28px;line-height:38px;font-weight:600}
p{margin:6px 0 24px;font-size:15px;line-height:26px;color:#e9ebfb}
.b{display:flex;gap:16px}
.b button{height:40px;border-radius:8px;font-size:15px;padding:0 15px;gap:8px}
.b .new{background:#fff;color:#764ba2;font-weight:700;box-shadow:0 4px 12px rgba(0,0,0,.2)}
.b .out{background:rgba(255,77,79,.2);border:1px solid rgba(255,77,79,.4);padding:0 14px}
.s{flex:0 0 32%;display:grid;grid-template-columns:1fr 1fr;gap:16px}`,
`<div class="t"><h2>Gestión de Pacientes</h2><p>Información crítica para el pase de guardia - Turno 13:54</p><div class="b"><button class="new">${ic('plus', 16)}Nuevo Paciente</button><button class="out">${ic('export', 17)}Registrar Egreso</button></div></div>
<div class="s"><stat-item label="Total Pacientes" icon="team" color="#fff">7</stat-item><stat-item label="Estado Crítico" icon="alert" color="#ff4d4f">0</stat-item><stat-item label="En Aislamiento" icon="shield" color="#faad14">1</stat-item><stat-item label="Con Medicación" icon="medicine" color="#52c41a">2</stat-item></div>`);

def('ui-card', `:host{display:block;padding:24px;background:#fff;border:1px solid #f0f0f0;border-radius:12px}`);

def('search-box', `
:host{display:block}
label{display:flex;align-items:center;height:40px;padding:0 11px 0 10px;border:1px solid #d9d9d9;border-radius:8px;color:#1890ff}
input{flex:1;min-width:0;border:0;outline:0;padding:0;font:inherit;font-size:15px;background:none}
input::placeholder{color:#bfbfbf;opacity:1}`,
`<label><input type="text" aria-label="Buscar pacientes" placeholder="Buscar por nombre, cama o diagnóstico...">${ic('search', 20)}</label>`);

const TONES = { blue: ['#e6f4ff', '#91caff', '#0958d9'], green: ['#f6ffed', '#b7eb8f', '#389e0d'], orange: ['#fff7e6', '#ffd591', '#d46b08'], red: ['#fff1f0', '#ffa39e', '#cf1322'], plain: ['#fafafa', 'transparent', '#1f1f1f'] };
def('ui-tag', e => { const [b, l, c] = TONES[e.getAttribute('tone')]; return `
:host{display:inline-flex;align-items:center;gap:7px;height:26px;padding:0 8px;border:1px solid ${l};border-radius:6px;background:${b};color:${c};font-size:12px;font-weight:600;white-space:nowrap}
:host([medium]){font-weight:500}
:host([small]){font-size:11px}`; },
  e => `${e.hasAttribute('icon') ? ic(e.getAttribute('icon'), 12) : ''}<slot></slot>`);

const ROWS = [
  ['Patricia Díaz', 40, 'Internación', 'CAM-004', 'Por definir', '22/09', 'hace 15 días', [['green', '', 'Sin alertas']]],
  ['Carmen Fernández', 67, 'Emergencias', 'CAM-015', 'Por definir', '22/09', 'hace 15 días', [['orange', 'shield', 'Aislam.'], ['blue', 'medicine', 'Med. (1)']]],
  ['José García', 54, 'Emergencias', 'CAM-018', 'Por definir', '22/09', 'hace 15 días', [['red', 'warn', 'Alerg. (1)']]],
  ['San juan', 36, 'Emergencias', 'CAM-020', 'Por definición', '27/09', 'hace 10 días', [['green', '', 'Sin alertas']]],
];
def('patient-table', `
:host{display:flex;border-radius:8px 8px 0 0;overflow:hidden}
table{flex:1;width:100%;table-layout:fixed;border-collapse:separate;border-spacing:0}
th{height:57px;padding:0 12px;text-align:left;font-size:13px;font-weight:500;color:#4b5563;background:#f8fafc;border-bottom:2px solid #e5e7eb;position:relative}
th::before{content:"";position:absolute;left:0;top:18px;width:1px;height:20px;background:#d1d5db}
td{height:89px;padding:0 12px;background:#fafafa;border-bottom:1px solid #f0f0f0;font-size:12px}
td:first-child,td:last-child,tr:nth-child(4) td{background:#fff}
tr:nth-child(2) td{background:#f8fafc}
.st{display:flex;flex-direction:column;align-items:flex-start}
.loc{gap:8px}
.name{font-size:13px;font-weight:600;line-height:22px;padding-top:2px}
.in{line-height:24px;font-size:12px}.in small{display:block;font-size:11px;color:#8c8c8c}
.al{display:flex;gap:16px}
.ac{display:flex;gap:8px}
.ac button{width:32px;height:32px;border-radius:50%;border:1px solid #d9d9d9;background:#fff;flex:none;box-shadow:0 2px 2px rgba(0,0,0,.03)}
.ac .p{background:#2563eb;border-color:#2563eb;color:#fff}
.sb{flex:0 0 15px;display:flex;flex-direction:column;align-items:center;background:#f0f0f0}
.sb .h{align-self:stretch;height:57px;background:#f8fafc;border-bottom:2px solid #e5e7eb}
.sb svg{width:8px;height:15px;flex:none}
.sb .th{width:7px;flex:1;border-radius:4px;background:#b3b3b3}`,
`<table><colgroup><col style="width:183px"><col style="width:171px"><col style="width:171px"><col style="width:122px"><col style="width:110px"><col style="width:219px"><col style="width:147px"></colgroup>
<thead><tr>${['PACIENTE', 'UBICACIÓN', 'DIAGNÓSTICO', 'ESTADO', 'INGRESO', 'ALERTAS', 'ACCIONES'].map(h => `<th scope="col">${h}</th>`).join('')}</tr></thead>
<tbody>${ROWS.map(([n, a, u, c, d, f, h, al]) => `<tr><td><div class="st"><span class="name">${n}</span><ui-tag tone="plain" small medium>${a} años</ui-tag></div></td><td><div class="st loc"><ui-tag tone="blue" small icon="pin">${u}</ui-tag><ui-tag tone="green">${c}</ui-tag></div></td><td>${d}</td><td><ui-tag tone="green" medium>ESTABLE</ui-tag></td><td><div class="in">${f}<small>${h}</small></div></td><td><div class="al">${al.map(([t, i, x]) => `<ui-tag small medium tone="${t}"${i ? ` icon="${i}"` : ''}>${x}</ui-tag>`).join('')}</div></td><td><div class="ac"><button class="p" aria-label="Ver">${ic('eye', 14)}</button><button aria-label="Historial">${ic('clock', 14)}</button><button aria-label="Notas">${ic('doc', 14)}</button></div></td></tr>`).join('')}</tbody></table>
<div class="sb" aria-hidden="true"><div class="h"></div><svg viewBox="0 0 8 15"><path d="M1 10L4 7L7 10" fill="none" stroke="#a8a8a8" stroke-width="2"/></svg><div class="th"></div></div>`);

def('page-view', `
:host{display:flex;border-radius:8px;overflow:hidden;background:#fff;min-height:0}
.app{flex:1;min-width:0;display:flex;flex-direction:column;min-height:0}
app-header{flex:none;z-index:1}
.row{flex:1;display:flex;min-height:0}
main{flex:1;min-width:0;padding:24px;background:#f5f5f5;overflow:hidden}
.in{display:flex;flex-direction:column;background:#f0f2f5}
.in ui-card{margin-top:24px}.in ui-card + ui-card{margin-top:16px}
.sb{width:8px;flex:none}.sb i{display:block;height:65.5%;border-radius:4px;background:#64748b}`,
`<div class="app"><app-header></app-header><div class="row"><app-nav></app-nav><main><div class="in"><patient-banner></patient-banner><ui-card><search-box></search-box></ui-card><ui-card><patient-table></patient-table></ui-card></div></main></div></div><div class="sb" aria-hidden="true"><i></i></div>`);

def('desktop-shell', `
:host{display:flex;height:100vh;overflow:hidden}
os-taskbar{flex:0 0 62px}
browser-sidebar{flex:0 0 48px;margin:1px 4px 1px 1px}
.b{flex:1;min-width:0;display:flex;flex-direction:column;padding-right:1px}
tab-strip,address-bar{flex:none}
page-view{flex:1;margin:4px 0 1px}`,
`<os-taskbar></os-taskbar><browser-sidebar></browser-sidebar><div class="b"><tab-strip></tab-strip><address-bar></address-bar><page-view></page-view></div>`);
</script>
</body>
</html>
